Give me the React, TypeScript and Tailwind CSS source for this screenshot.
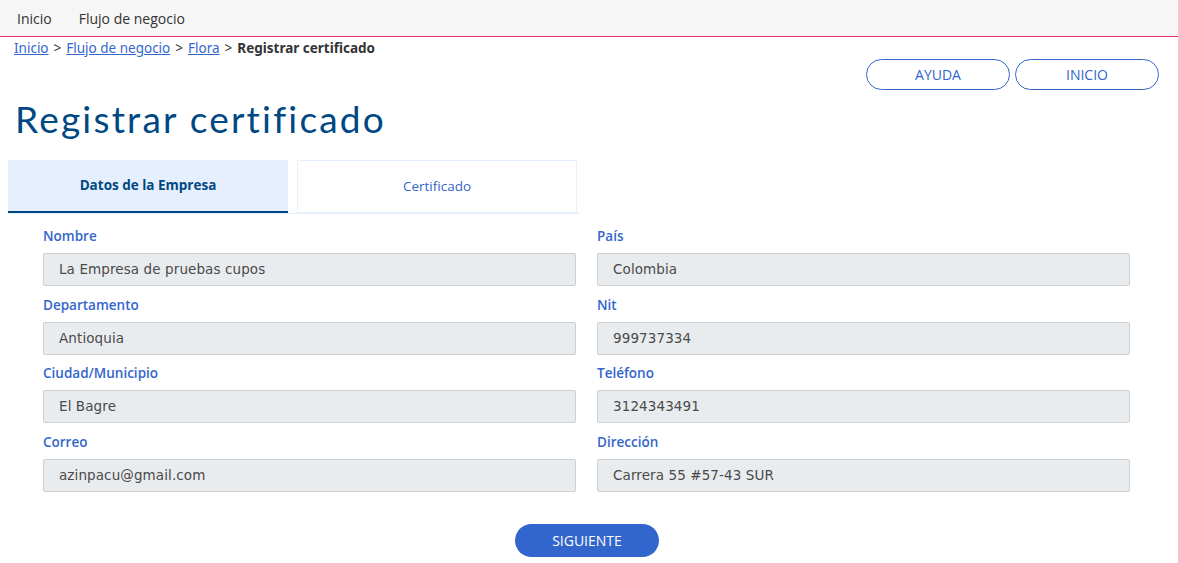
import React from "react";

const FIELDS: { label: string; value: string }[][] = [
  [
    { label: "Nombre", value: "La Empresa de pruebas cupos" },
    { label: "País", value: "Colombia" },
  ],
  [
    { label: "Departamento", value: "Antioquia" },
    { label: "Nit", value: "999737334" },
  ],
  [
    { label: "Ciudad/Municipio", value: "El Bagre" },
    { label: "Teléfono", value: "3124343491" },
  ],
  [
    { label: "Correo", value: "azinpacu@gmail.com" },
    { label: "Dirección", value: "Carrera 55 #57-43 SUR" },
  ],
];

function Field({ label, value }: { label: string; value: string }) {
  return (
    <div className="flex flex-col">
      <label className="h-[33px] flex items-center text-[13.5px] font-semibold text-[#3366cc] font-['Open_Sans',sans-serif]">
        {label}
      </label>
      <div className="h-[33px] flex items-center pl-[15px] bg-[#e9ecef] border border-[#cfcfcf] rounded-[2px] text-[#4a4a4a] font-['DejaVu_Sans',sans-serif] tracking-[0.1px] text-[13.5px]">
        {value}
      </div>
    </div>
  );
}

export default function App() {
  return (
    <div className="w-[1178px] min-h-[563px] bg-white font-['Open_Sans',sans-serif]">
      <nav className="h-[37px] bg-[#f5f6f5] border-b border-[#e5336a] flex items-center gap-[27px] pl-[17px] text-[14px] text-[#333]">
        <span>Inicio</span>
        <span>Flujo de negocio</span>
      </nav>

      <div className="px-[14px] pt-[2px] text-[13.5px] text-[#333] leading-[19px] font-['Noto_Sans',sans-serif]">
        <a className="text-[#3366cc] underline">Inicio</a>
        <span className="mx-[5px]">&gt;</span>
        <a className="text-[#3366cc] underline">Flujo de negocio</a>
        <span className="mx-[5px]">&gt;</span>
        <a className="text-[#3366cc] underline">Flora</a>
        <span className="mx-[5px]">&gt;</span>
        <span className="font-bold text-[#333]">Registrar certificado</span>
      </div>

      <div className="flex justify-end gap-[5px] pr-[19px] pt-[1px]">
        <button className="w-[144px] h-[31px] rounded-full border border-[#3366cc] text-[#3366cc] text-[14px]">
          AYUDA
        </button>
        <button className="w-[144px] h-[31px] rounded-full border border-[#3366cc] text-[#3366cc] text-[14px]">
          INICIO
        </button>
      </div>

      <h1 className="pl-[15px] mt-[7px] h-[44px] text-[37px] leading-[44px] text-[#004884] font-['Lato',sans-serif] tracking-[2.2px]">
        Registrar certificado
      </h1>

      <div className="ml-[8px] mt-[19px] w-[572px] flex gap-[9px] border-b border-[#e6effd]">
        <div className="w-[280px] h-[53px] bg-[#e6effd] border-b-2 border-[#004884] flex items-center justify-center text-[13.5px] font-bold text-[#004884]">
          Datos de la Empresa
        </div>
        <div className="w-[280px] h-[53px] bg-white border border-[#e6effd] flex items-center justify-center text-[13.5px] text-[#3366cc]">
          Certificado
        </div>
      </div>

      <div className="mt-[6px] pl-[43px] w-[1130px] grid grid-cols-2 gap-x-[21px] gap-y-[2.5px]">
        {FIELDS.flat().map((f) => (
          <Field key={f.label} {...f} />
        ))}
      </div>

      <div className="pl-[515px] pt-[32px] pb-[6px]">
        <button className="w-[144px] h-[33px] rounded-full bg-[#3366cc] text-white text-[14px]">
          SIGUIENTE
        </button>
      </div>
    </div>
  );
}
